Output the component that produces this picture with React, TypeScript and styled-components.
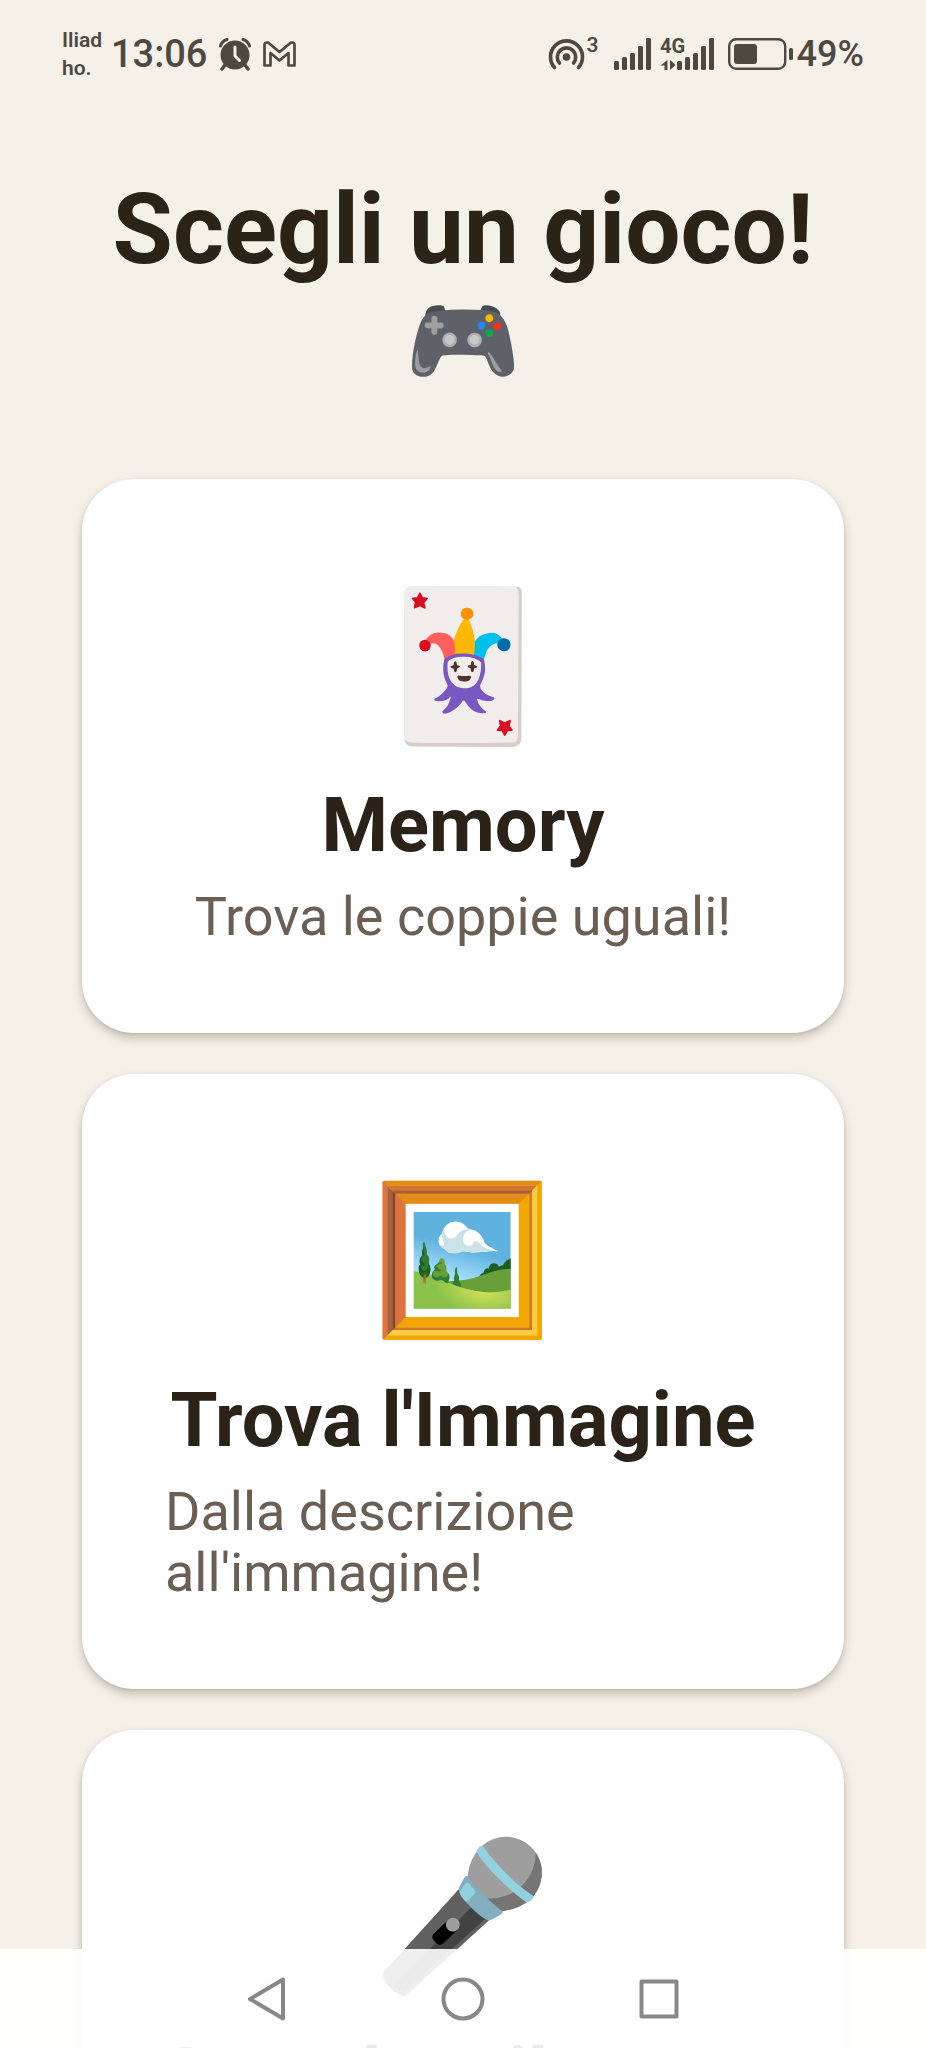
import React from 'react';
import styled, { createGlobalStyle } from 'styled-components';

const ink = '#4d4941';

const GlobalStyle = createGlobalStyle`
  * { box-sizing: border-box; }
  body {
    margin: 0;
    background: #f5f0e8;
    font-family: Roboto, "Noto Sans", sans-serif;
  }
`;

const Screen = styled.div`
  position: relative;
  height: 100vh;
  overflow: hidden;
  display: flex;
  flex-direction: column;
  background: #f5f0e8;
`;

const StatusBar = styled.header`
  flex: none;
  display: flex;
  align-items: center;
  justify-content: space-between;
  height: 108px;
  padding: 0 62px;
  color: ${ink};
`;

const StatusGroup = styled.div<{ $gap: number }>`
  display: flex;
  align-items: center;
  gap: ${({ $gap }) => $gap}px;
`;

const Carrier = styled.span`
  width: 44px;
  font-size: 21px;
  line-height: 28px;
  font-weight: 600;
`;

const StatusText = styled.span<{ $large?: boolean }>`
  font-size: ${({ $large }) => ($large ? 38 : 36)}px;
  line-height: 42px;
  font-weight: 500;
`;

const Content = styled.main`
  flex: 1;
  min-height: 0;
  overflow-y: auto;
  scrollbar-width: none;
  padding: 65px 82px 140px;
`;

const Title = styled.h1`
  margin: 0 0 82px;
  font-size: 98px;
  line-height: 114px;
  font-weight: 700;
  color: #2b2218;
  text-align: center;
`;

const TitleEmoji = styled.span`
  display: block;
  font-family: "Noto Color Emoji", sans-serif;
  font-size: 93px;
  line-height: 110px;
  font-weight: 400;
`;

const GameList = styled.div`
  display: flex;
  flex-direction: column;
  gap: 41px;
`;

const GameCard = styled.button`
  display: flex;
  flex-direction: column;
  align-items: center;
  width: 100%;
  padding: 83px 83px 86px;
  border: 0;
  border-radius: 52px;
  background: #fff;
  box-shadow: 0 5px 10px rgba(60, 50, 30, 0.26), 0 1px 3px rgba(60, 50, 30, 0.1);
  font-family: inherit;
  text-align: left;
  cursor: pointer;
`;

const GameEmoji = styled.span`
  font-family: "Noto Color Emoji", sans-serif;
  font-size: 145px;
  line-height: 206px;
`;

const GameName = styled.span`
  margin-top: 11px;
  font-size: 76px;
  line-height: 92px;
  font-weight: 700;
  color: #2b2218;
  white-space: nowrap;
`;

const GameText = styled.span`
  margin-top: 15px;
  font-size: 54px;
  line-height: 61px;
  color: #6b5e52;
`;

const NavBar = styled.nav`
  position: absolute;
  left: 0;
  right: 0;
  bottom: 0;
  display: flex;
  align-items: center;
  justify-content: center;
  gap: 100px;
  height: 99px;
  background: rgba(255, 255, 255, 0.9);
`;

const NavButton = styled.button`
  display: grid;
  place-items: center;
  width: 96px;
  height: 96px;
  padding: 0;
  border: 0;
  background: none;
  color: #888;
  cursor: pointer;
`;

const AlarmIcon = () => (
  <svg width="32" height="33" viewBox="0 0 32 33" fill={ink} aria-hidden="true">
    <circle cx="16" cy="17" r="14.5" />
    <path d="M1.5 8 Q3 3 8 1.5 M30.500 8 Q29 3 24 1.500" fill="none" stroke={ink} strokeWidth="3" strokeLinecap="round" />
    <path d="M6 27 L3 31 M26 27 L29 31" stroke={ink} strokeWidth="3.500" strokeLinecap="round" />
    <path d="M16 9 V18 L20.500 22.500" fill="none" stroke="#f5f0e8" strokeWidth="3" strokeLinecap="round" strokeLinejoin="round" />
  </svg>
);

const MailIcon = () => (
  <svg width="33" height="26" viewBox="0 0 33 26" fill="none" stroke={ink} strokeWidth="2.700" strokeLinejoin="round" aria-hidden="true">
    <path d="M1.500 24.500 V4 Q1.500 1.500 4 1.500 H5 L16.500 11 L28 1.500 H29 Q31.500 1.500 31.500 4 V24.500 H25.500 V12 L16.500 19.500 L7.500 12 V24.500 Z" />
  </svg>
);

const HotspotIcon = () => (
  <svg width="52" height="33" viewBox="0 0 52 33" overflow="visible" fill="none" stroke={ink} strokeWidth="3.600" strokeLinecap="round" aria-hidden="true">
    <path d="M6.500 29.500 A16 16 0 1 1 30.500 29.500" />
    <path d="M11.500 25 A9.200 9.200 0 1 1 25.500 25" />
    <circle cx="18.500" cy="19" r="3.800" fill={ink} stroke="none" />
    <text x="38.500" y="14" fill={ink} stroke="none" fontFamily="Roboto, sans-serif" fontSize="21" fontWeight="600">3</text>
  </svg>
);

const bars: [number, number][] = [[0, 9], [8, 13], [16, 17], [24, 24], [32, 32]];

const SignalIcon = () => (
  <svg width="37" height="32" viewBox="0 0 37 32" fill={ink} aria-hidden="true">
    {bars.map(([x, h]) => (
      <rect key={x} x={x} y={32 - h} width="5" height={h} rx="1.500" />
    ))}
  </svg>
);

const LteSignalIcon = () => (
  <svg width="53" height="32" viewBox="0 0 53 32" overflow="visible" fill={ink} aria-hidden="true">
    {bars.map(([x, h]) => (
      <rect key={x} x={x + 16} y={32 - h} width="5" height={h} rx="1.500" />
    ))}
    <text x="-1" y="15" fontFamily="Roboto, sans-serif" fontSize="20" fontWeight="700">4G</text>
    <path d="M6.500 22 V32 H3.500 V27.500 H-0.500 Z M9 22 L14.500 27 L9 32 Z" />
  </svg>
);

const BatteryIcon = () => (
  <svg width="65" height="32" viewBox="0 0 65 32" aria-hidden="true">
    <rect x="1.200" y="1.200" width="56" height="29.600" rx="7" fill="none" stroke={ink} strokeWidth="2.400" />
    <rect x="6" y="6" width="23" height="20" rx="3" fill={ink} />
    <rect x="61" y="10" width="4" height="12" rx="1.500" fill={ink} />
  </svg>
);

const games = [
  { emoji: '🃏', name: 'Memory', text: 'Trova le coppie uguali!' },
  { emoji: '🖼️', name: "Trova l'Immagine", text: "Dalla descrizione all'immagine!" },
  { emoji: '🎤', name: 'Completa il Verso', text: 'Trova la parola che manca!' },
];

export default function App() {
  return (
    <Screen>
      <GlobalStyle />
      <StatusBar>
        <StatusGroup $gap={12}>
          <StatusGroup $gap={5}>
            <Carrier>Iliad ho.</Carrier>
            <StatusText $large>13:06</StatusText>
          </StatusGroup>
          <AlarmIcon />
          <MailIcon />
        </StatusGroup>
        <StatusGroup $gap={14}>
          <HotspotIcon />
          <StatusGroup $gap={10}>
            <SignalIcon />
            <LteSignalIcon />
          </StatusGroup>
          <StatusGroup $gap={4}>
            <BatteryIcon />
            <StatusText>49%</StatusText>
          </StatusGroup>
        </StatusGroup>
      </StatusBar>
      <Content>
        <Title>
          Scegli un gioco! <TitleEmoji>🎮</TitleEmoji>
        </Title>
        <GameList>
          {games.map((game) => (
            <GameCard key={game.name} type="button">
              <GameEmoji>{game.emoji}</GameEmoji>
              <GameName>{game.name}</GameName>
              <GameText>{game.text}</GameText>
            </GameCard>
          ))}
        </GameList>
      </Content>
      <NavBar>
        <NavButton type="button" aria-label="Indietro">
          <svg width="44" height="46" viewBox="0 0 44 46" fill="none" stroke="currentColor" strokeWidth="4" strokeLinejoin="round">
            <path d="M38 3.500 V42.500 L5 23 Z" />
          </svg>
        </NavButton>
        <NavButton type="button" aria-label="Home">
          <svg width="44" height="44" viewBox="0 0 44 44" fill="none" stroke="currentColor" strokeWidth="4">
            <circle cx="22" cy="22" r="19.500" />
          </svg>
        </NavButton>
        <NavButton type="button" aria-label="App recenti">
          <svg width="40" height="40" viewBox="0 0 40 40" fill="none" stroke="currentColor" strokeWidth="4" strokeLinejoin="round">
            <rect x="2.500" y="2.500" width="35" height="35" />
          </svg>
        </NavButton>
      </NavBar>
    </Screen>
  );
}
